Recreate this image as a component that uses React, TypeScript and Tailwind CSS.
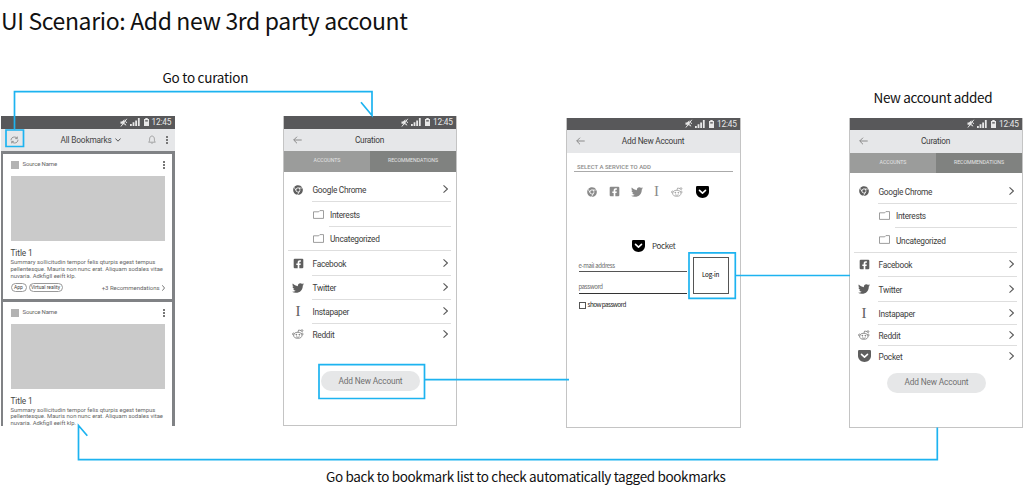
import type { ReactNode } from "react";
import { FaChrome, FaFacebookSquare, FaTwitter } from "react-icons/fa";

function StatusBar() {
  return (
    <div className="flex h-[12.5px] shrink-0 items-center justify-end bg-[#58585a] pr-[3px] text-[#e8e8e8]">
      <svg className="h-[9px] w-[9px]" viewBox="0 0 9 9" fill="none" stroke="currentColor">
        <path d="M1.500 3.500h1.500L5.500 1.200v6L4 5.800H1.500z" fill="currentColor" stroke="none" />
        <path d="M1.900 8.500 7.800 0.800M6.500 3.200l1.200 1.700M5.800 5.500l1 1.900" strokeWidth="1" />
      </svg>
      <svg className="ml-[2px] h-[8px] w-[10px]" viewBox="0 0 10 8" fill="currentColor">
        <path d="M0 6h1.800v2H0zM2.600 4.200h1.800V8H2.600zM5.200 2.400H7V8H5.200zM7.900 0h1.800v8H7.900z" />
      </svg>
      <svg className="ml-[4px] h-[8px] w-[5px]" viewBox="0 0 5 8" fill="currentColor">
        <path d="M1.300 0h2.400v1H5v7H0V1h1.300z" />
        <path d="M1.200 2.200h2.600v1.300H1.200z" fill="#58585a" />
      </svg>
      <span className="ml-[3px] w-[20px] whitespace-nowrap text-[8.300px] leading-none tracking-[-0.200px]">12:45</span>
    </div>
  );
}

function BackArrow() {
  return (
    <svg className="h-[8px] w-[9px]" viewBox="0 0 9 8" fill="none" stroke="#8a8a8a" strokeWidth="1">
      <path d="M8.700 4H0.800M4 0.700 0.700 4 4 7.300" />
    </svg>
  );
}

function Chevron() {
  return (
    <svg className="h-[8px] w-[5px]" viewBox="0 0 5 8" fill="none" stroke="#5a5a5a" strokeWidth="1.100">
      <path d="M0.500 0.400 4.400 4 0.500 7.600" />
    </svg>
  );
}

function Kebab() {
  return (
    <svg className="h-[8px] w-[2px]" viewBox="0 0 2 8" fill="#777">
      <path d="M0 0h2v2H0zM0 3h2v2H0zM0 6h2v2H0z" />
    </svg>
  );
}

function Folder() {
  return (
    <svg className="h-[9px] w-[11px]" viewBox="0 0 11 9" fill="none" stroke="#858585" strokeWidth="0.800">
      <path d="M0.500 8.400V1.800h5.200L6.900 0.600h3.600v7.800z" />
    </svg>
  );
}

function RedditIcon() {
  return (
    <svg className="h-[10px] w-[12px]" viewBox="0 0 12 10" fill="none" stroke="currentColor" strokeWidth="0.650">
      <ellipse cx="5.800" cy="6.300" rx="4.100" ry="3" />
      <path d="M2.300 4.600C1.800 3.700.4 4 .5 5.100c0 .6.5 1 1.100 1.100M9.300 4.600c.5-.9 1.900-.6 1.800.5 0 .6-.5 1-1.100 1.100M5.900 3.300l.7-2.300 2.400.5M4.100 7.700c1 .7 2.400.7 3.400 0" />
      <circle cx="10" cy="1.600" r="0.900" />
      <circle cx="4.300" cy="5.700" r="0.450" fill="currentColor" />
      <circle cx="7.300" cy="5.700" r="0.450" fill="currentColor" />
    </svg>
  );
}

function PocketIcon() {
  return (
    <svg className="h-[12px] w-[13px] shrink-0" viewBox="0 0 13 12">
      <path d="M1.200 0h10.600Q13 0 13 1.200v4.600C13 9.500 10 12 6.500 12S0 9.500 0 5.800V1.200Q0 0 1.200 0z" fill="currentColor" />
      <path d="M3.500 4.300 6.500 7.100 9.500 4.300" fill="none" stroke="#fff" strokeWidth="1.600" strokeLinecap="round" strokeLinejoin="round" />
    </svg>
  );
}

function InstapaperIcon() {
  return <span className="font-['Liberation_Serif',serif] text-[15px] leading-none">I</span>;
}

function Title({ children }: { children: ReactNode }) {
  return (
    <div className="grid h-[22.500px] shrink-0 grid-cols-[20px_1fr_20px] items-center bg-[#e6e7e9] px-[9px]">
      <BackArrow />
      <span className="pr-[1px] text-center text-[8.300px] leading-none tracking-[-0.250px] text-[#3c3c3c]">{children}</span>
    </div>
  );
}

function ListRow({ icon, label, size, last }: { icon: ReactNode; label: string; size: string; last?: boolean }) {
  return (
    <div className={`flex ${size}`}>
      <div className="flex w-[20px] items-center justify-center text-[#5e5e5e]">{icon}</div>
      <div className={`ml-[4px] flex flex-1 items-center justify-between pr-[3px] ${last ? "" : "border-b border-[#dedede]"}`}>
        <span className="pt-[2px] pl-[0.500px] text-[8.300px] leading-none tracking-[-0.280px] text-[#3c3c3c]">{label}</span>
        <Chevron />
      </div>
    </div>
  );
}

function FolderRow({ label, last }: { label: string; last?: boolean }) {
  return (
    <div className={`flex h-[24.500px] ${last ? "border-b border-[#dedede]" : ""}`}>
      <div className="ml-[25px] flex w-[16px] items-center">
        <Folder />
      </div>
      <div className={`flex flex-1 items-center ${last ? "" : "border-b border-[#dedede]"}`}>
        <span className="pt-[2px] pl-px text-[8.300px] leading-none tracking-[-0.280px] text-[#3c3c3c]">{label}</span>
      </div>
    </div>
  );
}

function CurationPhone({ pocket }: { pocket?: boolean }) {
  return (
    <section className="flex h-[310px] w-[174px] flex-col border-x border-b border-[#c4c4c4] bg-white">
      <StatusBar />
      <Title>Curation</Title>
      <div className="grid h-[20.500px] shrink-0 grid-cols-2 bg-[#9b9c9b] text-center text-[5.200px] leading-[19px] text-[#e4e4e4]">
        <span>ACCOUNTS</span>
        <span className="bg-[#808280]">RECOMMENDATIONS</span>
      </div>
      <div className="h-[194px] shrink-0 pt-[6px] pr-[5px] pl-[4px]">
        <ListRow icon={<FaChrome size={10} />} label="Google Chrome" size="h-[24.500px]" />
        <FolderRow label="Interests" />
        <FolderRow label="Uncategorized" last />
        <ListRow icon={<FaFacebookSquare size={11} />} label="Facebook" size="h-[24.500px]" />
        <ListRow icon={<FaTwitter size={12} />} label="Twitter" size="h-[24.500px]" />
        <ListRow icon={<InstapaperIcon />} label="Instapaper" size="h-[23.500px]" />
        <ListRow icon={<RedditIcon />} label="Reddit" size="h-[20.500px]" last={!pocket} />
        {pocket && <ListRow icon={<PocketIcon />} label="Pocket" size="h-[20.500px]" last />}
      </div>
      <button className="mt-[5.500px] ml-[37px] h-[20px] w-[99px] shrink-0 rounded-full bg-[#e6e7e8] text-[8.300px] leading-none tracking-[-0.150px] text-[#707070]">
        Add New Account
      </button>
    </section>
  );
}

function BookmarkCard({ footer }: { footer?: boolean }) {
  return (
    <article className="h-[145px] shrink-0 bg-white px-[7.500px] pt-[7px]">
      <div className="flex h-[8px] items-center">
        <div className="h-[8px] w-[8px] bg-[#b3b3b3]" />
        <span className="-mt-[2px] ml-[4px] flex-1 text-[6px] leading-none tracking-[-0.150px] text-[#666]">Source Name</span>
        <Kebab />
      </div>
      <div className="mt-[7px] h-[65px] bg-[#cacaca]" />
      <h2 className="mt-[7px] text-[8.300px] leading-[10px] tracking-[-0.100px] text-[#444]">Title 1</h2>
      <p className="mt-[1px] text-[5.900px] leading-[6.800px] whitespace-nowrap text-[#666]">
        Summary sollicitudin tempor felis qturpis egest tempus
        <br />
        pellentesque. Mauris non nunc erat. Aliquam sodales vitae
        <br />
        nuvaria. Adkfigll eeift klp.
      </p>
      {footer && (
        <div className="mt-[4px] flex h-[9px] items-center text-[5px] leading-none text-[#444]">
          <span className="flex h-[9px] w-[16px] items-center justify-center rounded-full border border-[#999]">App</span>
          <span className="ml-[2px] flex h-[9px] w-[34px] items-center justify-center rounded-full border border-[#999] whitespace-nowrap">
            Virtual reality
          </span>
          <span className="ml-auto text-[6px] tracking-[-0.050px] text-[#666]">+3 Recommendations</span>
          <svg className="ml-[2px] h-[6px] w-[3px]" viewBox="0 0 3 6" fill="none" stroke="#555" strokeWidth="0.800">
            <path d="M0.300 0.300 2.500 3 0.300 5.700" />
          </svg>
        </div>
      )}
    </article>
  );
}

function BookmarksPhone() {
  return (
    <section className="flex h-[310px] w-[174px] flex-col overflow-hidden">
      <StatusBar />
      <div className="flex h-[22.500px] shrink-0 items-center bg-[#e6e7e9] pr-[7px] pl-[9px]">
        <svg className="h-[8px] w-[9px]" viewBox="0 0 9 8" fill="none" stroke="#8b8b8b" strokeWidth="0.900">
          <path d="M1 4.300C1 2.200 2.600 1 4.400 1c1.200 0 2 .4 2.700 1.300M7.300.6v2H5.200M8 3.700C8 5.800 6.400 7 4.600 7c-1.200 0-2-.4-2.700-1.300M1.700 7.400v-2h2.100" />
        </svg>
        <span className="mt-px ml-[42px] text-[8.300px] leading-none tracking-[-0.180px] whitespace-nowrap text-[#444]">All Bookmarks</span>
        <svg className="ml-[3px] h-[4px] w-[6px]" viewBox="0 0 6 4" fill="none" stroke="#555" strokeWidth="1">
          <path d="M0.400 0.500 3 3.200 5.600 0.500" />
        </svg>
        <svg className="ml-auto h-[9px] w-[8px]" viewBox="0 0 8 9" fill="none" stroke="#8b8b8b" strokeWidth="0.700">
          <path d="M0.600 7.200c1-.8 1-1.800 1-3.200C1.600 2.300 2.600 1 4 1s2.400 1.300 2.400 3c0 1.400 0 2.400 1 3.200zM3.200 7.800c.2.700 1.400.7 1.600 0" />
        </svg>
        <div className="ml-[10px] flex">
          <Kebab />
        </div>
      </div>
      <div className="flex flex-1 flex-col gap-[2.500px] overflow-hidden bg-[#808285] px-[2.500px] pt-[3px]">
        <BookmarkCard footer />
        <BookmarkCard />
      </div>
    </section>
  );
}

function AddAccountPhone() {
  return (
    <section className="flex h-[310px] w-[175px] flex-col border-x border-b border-[#c4c4c4] bg-white">
      <StatusBar />
      <Title>Add New Account</Title>
      <div className="mx-[7px] mt-[9px] h-[10px] border-b border-[#aaa] pl-[3px] text-[6px] leading-[9px] font-medium text-[#8c8c8c]">
        SELECT A SERVICE TO ADD
      </div>
      <div className="mt-[13px] ml-[20px] flex h-[14px] items-center text-[#8a8a8a]">
        <FaChrome size={10} />
        <FaFacebookSquare size={11} className="ml-[12px]" />
        <FaTwitter size={12} className="ml-[11px]" />
        <div className="ml-[11px] flex">
          <InstapaperIcon />
        </div>
        <div className="ml-[12px]">
          <RedditIcon />
        </div>
        <div className="ml-[13px] text-black">
          <PocketIcon />
        </div>
      </div>
      <div className="mt-[40px] ml-[65px] flex h-[14px] items-center font-['Noto_Sans_CJK_SC','Noto_Sans',sans-serif] text-[8px] leading-none tracking-[-0.350px] text-[#333]">
        <div className="text-black">
          <PocketIcon />
        </div>
        <span className="ml-[7px]">Pocket</span>
      </div>
      <div className="mt-[4px] ml-[11.500px] flex font-['Noto_Sans_CJK_SC','Noto_Sans',sans-serif] text-[6px] tracking-[-0.350px] text-[#666]">
        <div className="w-[108px]">
          <div className="mt-[3px] h-[12px] border-b border-[#555] leading-[11px]">e-mail address</div>
          <div className="mt-[9px] h-[13px] border-b border-[#333] leading-[12px]">password</div>
          <label className="mt-[8px] flex h-[8px] items-center text-[6.300px] leading-none tracking-[-0.550px] text-[#222]">
            <span className="mr-[2px] h-[7px] w-[7px] border border-[#555]" />
            show password
          </label>
        </div>
        <button className="ml-[6px] h-[37px] w-[36px] border border-[#555] text-[6.300px] leading-none tracking-[-0.250px] text-black">Log-in</button>
      </div>
    </section>
  );
}

function Connectors() {
  return (
    <svg className="absolute inset-0" width="1024" height="502" fill="none" stroke="#1db3f0" strokeWidth="1.700">
      <path d="M14.500 129.500V91.700H372V115.500L361 102.300" />
      <path d="M6 130h17.500v16.500H6z" />
      <path d="M319 364.700h105.500v33.800H319zM424.500 379.600H569" />
      <path d="M689 252.800h46.300v45.500H689zM735.300 275.500H850" />
      <path d="M937.300 427.500V459.700H78.500V425.500L87.300 435.800" />
    </svg>
  );
}

export default function App() {
  return (
    <main className="relative h-[502px] w-[1024px] overflow-hidden bg-white font-['Roboto',sans-serif]">
      <h1 className="h-[116px] pt-[4px] pl-px font-['Noto_Sans_CJK_SC','Noto_Sans',sans-serif] text-[23px] leading-[32px] tracking-[-0.360px] whitespace-nowrap text-[#111]">
        UI Scenario: Add new 3rd party account
      </h1>
      <div className="flex items-start pl-[0.500px]">
        <BookmarksPhone />
        <div className="ml-[108.500px]">
          <CurationPhone />
        </div>
        <div className="ml-[109px] pt-[1.500px]">
          <AddAccountPhone />
        </div>
        <div className="ml-[108px] pt-[1.500px]">
          <CurationPhone pocket />
        </div>
      </div>
      <Connectors />
      <div className="font-['Noto_Sans_CJK_SC','Noto_Sans',sans-serif] text-[13.500px] leading-[18px] tracking-[-0.360px] whitespace-nowrap text-[#111]">
        <p className="absolute top-[68px] left-[162.500px] tracking-[-0.250px]">Go to curation</p>
        <p className="absolute top-[88px] left-[873.500px]">New account added</p>
        <p className="absolute top-[467px] left-[326px]">Go back to bookmark list to check automatically tagged bookmarks</p>
      </div>
    </main>
  );
}
